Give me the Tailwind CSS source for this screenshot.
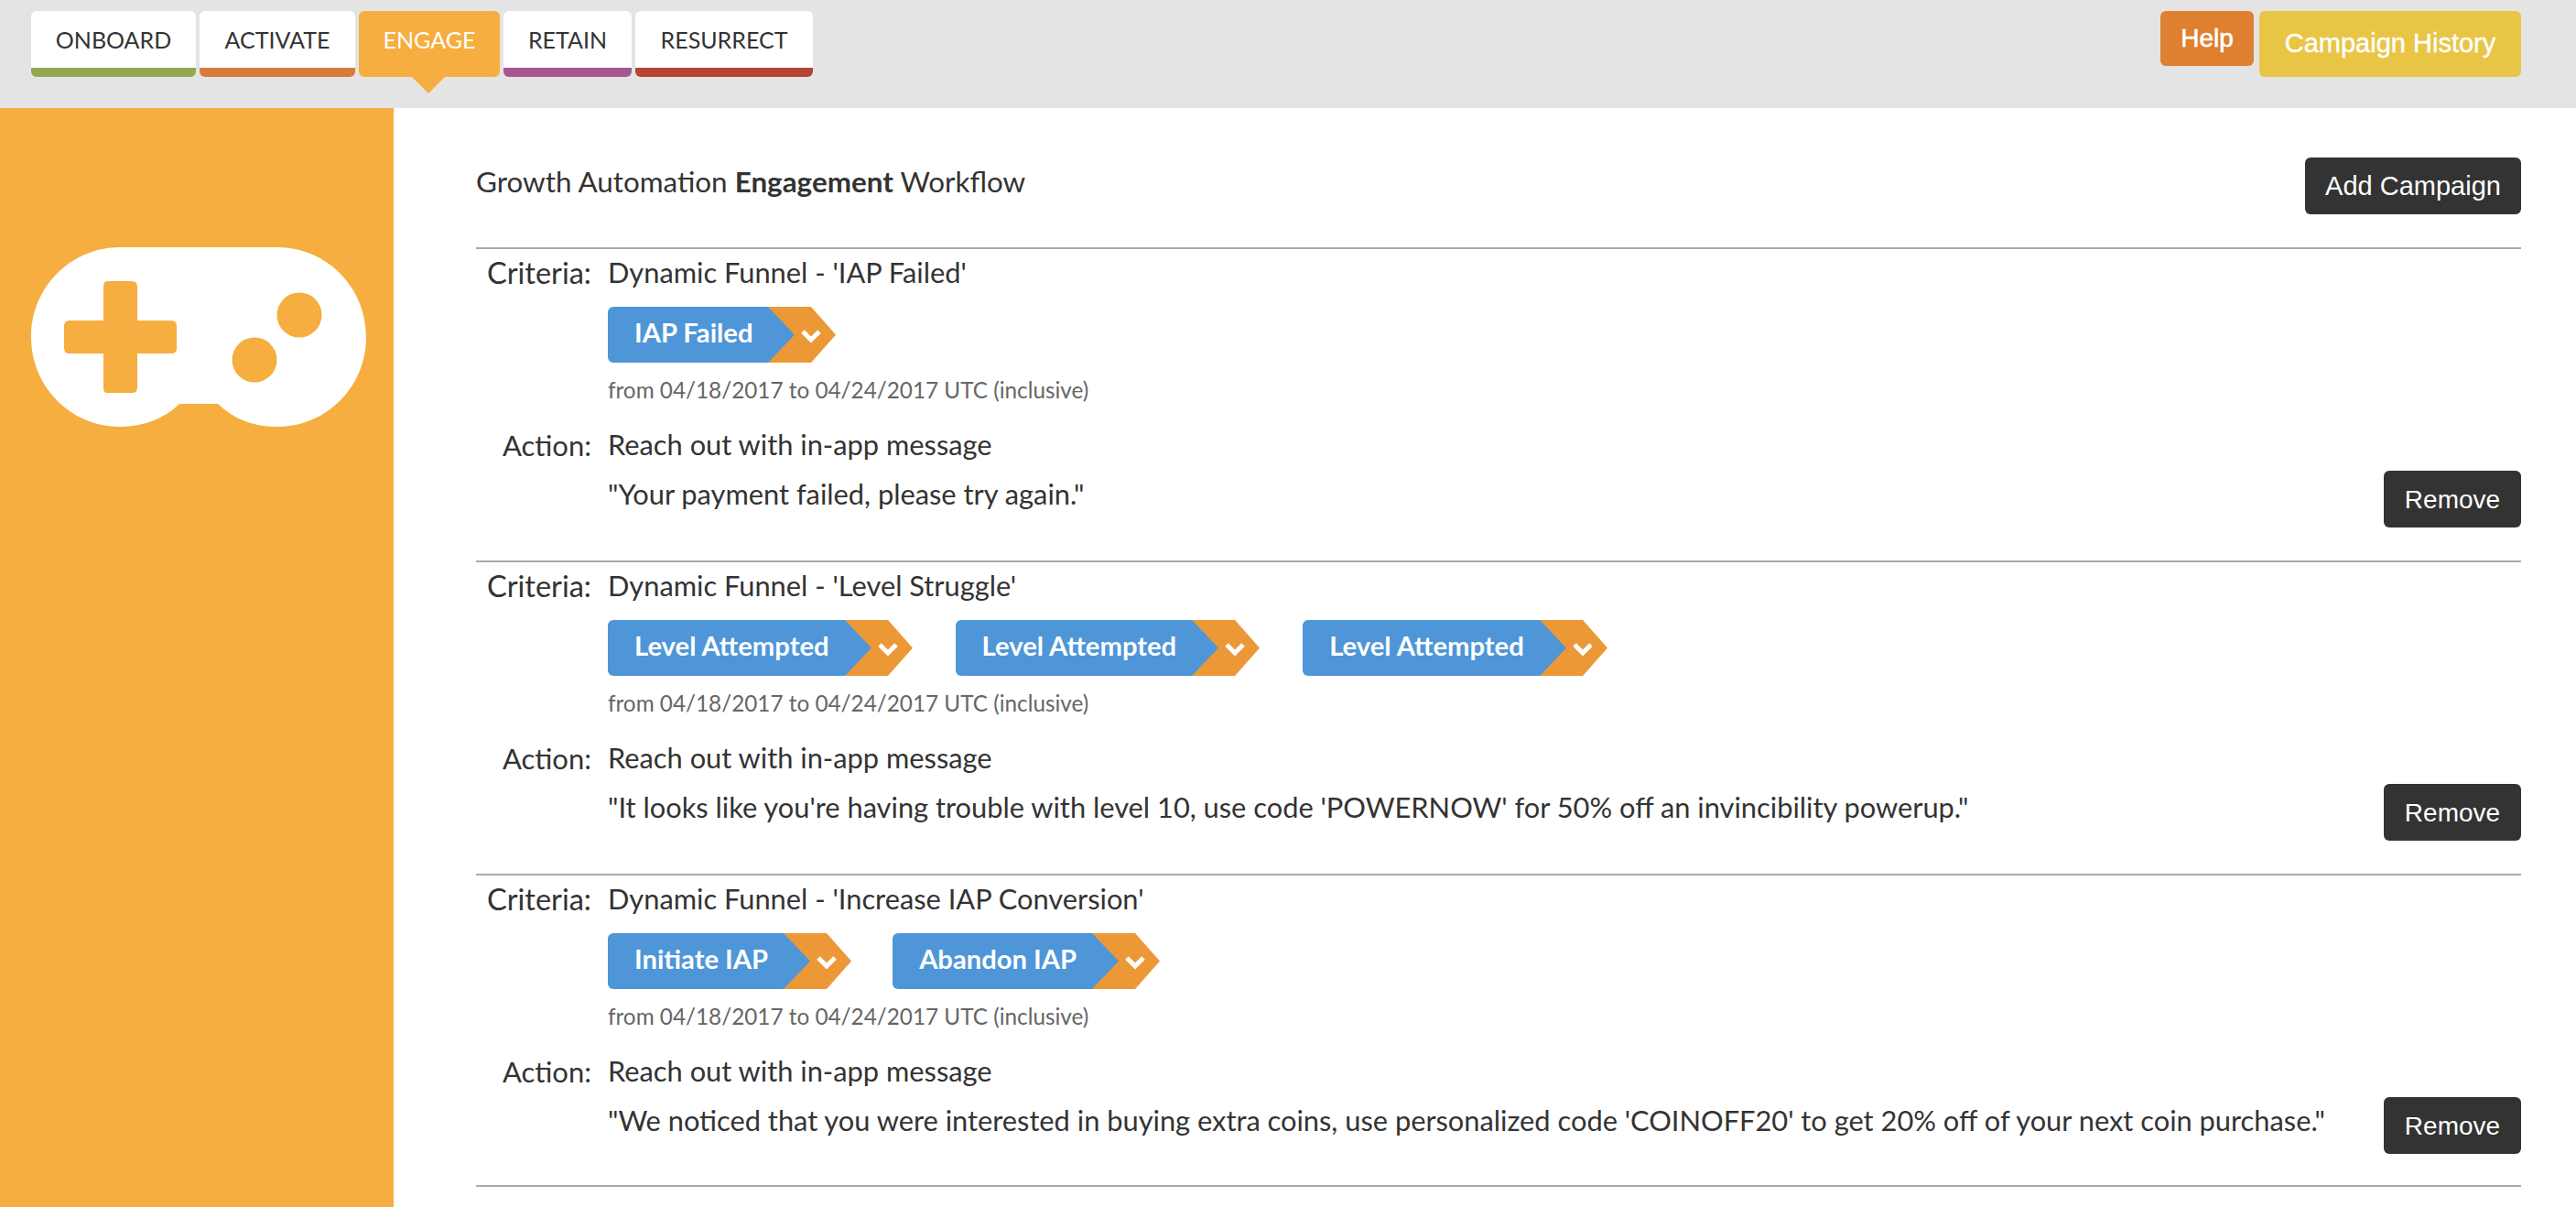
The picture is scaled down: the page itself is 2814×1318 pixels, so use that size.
<!DOCTYPE html>
<html lang="en">
<head>
  <meta charset="UTF-8">
  <title>Growth Automation</title>
  <script src="https://cdn.jsdelivr.net/npm/@tailwindcss/browser@4"></script>
</head>
<body class="bg-white font-['Lato',sans-serif] text-[#333] overflow-hidden">

  <!-- Top bar -->
  <header class="h-[118px] bg-[#e4e4e4] flex justify-between pl-[34px] pr-[60px] pt-[12px]">
    <nav class="flex gap-[4px] items-start text-[25px] leading-[72px]">
      <a class="w-[180px] h-[72px] bg-white rounded-[6px] border-b-[10px] border-[#93a84e] text-center leading-[62px]">ONBOARD</a>
      <a class="w-[170px] h-[72px] bg-white rounded-[6px] border-b-[10px] border-[#d77a3a] text-center leading-[62px]">ACTIVATE</a>
      <a class="relative w-[154px] h-[72px] bg-[#f5ae3f] text-white rounded-[6px] text-center leading-[62px]">ENGAGE
        <span class="absolute left-[58px] top-[72px] w-[36px] h-[18px] bg-[#f5ae3f] [clip-path:polygon(0_0,100%_0,50%_100%)]"></span>
      </a>
      <a class="w-[140px] h-[72px] bg-white rounded-[6px] border-b-[10px] border-[#a65790] text-center leading-[62px]">RETAIN</a>
      <a class="w-[194px] h-[72px] bg-white rounded-[6px] border-b-[10px] border-[#b44535] text-center leading-[62px]">RESURRECT</a>
    </nav>
    <div class="flex gap-[6px] items-start font-['Liberation_Sans',sans-serif] text-white">
      <button class="w-[102px] h-[60px] bg-[#de8030] rounded-[6px] text-[28px] [-webkit-text-stroke:0.6px_white]">Help</button>
      <button class="w-[286px] h-[72px] bg-[#e9c545] rounded-[6px] text-[29px] [-webkit-text-stroke:0.4px_white]">Campaign History</button>
    </div>
  </header>

  <div class="flex h-[1200px]">
    <!-- Sidebar -->
    <aside class="w-[430px] bg-[#f5ae3f] pt-[152px] pl-[34px] shrink-0">
      <svg width="366" height="196" viewBox="0 0 366 196">
        <path fill="#fff" d="M97 0H269C323 0 366 44 366 98C366 152 323 196 269 196C242 196 221 187 204 171H162C145 187 124 196 97 196C43 196 0 152 0 98C0 44 43 0 97 0Z"/>
        <path fill="#f5ae3f" d="M83 37H110Q116 37 116 43V80H153Q159 80 159 86V110Q159 116 153 116H116V153Q116 159 110 159H83Q79 159 79 153V116H42Q36 116 36 110V86Q36 80 42 80H79V43Q79 37 83 37Z"/>
        <circle fill="#f5ae3f" cx="293" cy="74" r="24.5"/>
        <circle fill="#f5ae3f" cx="244" cy="123" r="24.5"/>
      </svg>
    </aside>

    <main class="flex-1 pl-[90px] pr-[60px]">
      <div class="flex justify-between h-[154px] border-b-2 border-[#aaa] items-start pt-[54px]">
        <h1 class="text-[31.4px] leading-[40px] mt-[6px]">Growth Automation <b>Engagement</b> Workflow</h1>
        <button class="w-[236px] h-[62px] bg-[#333] text-white rounded-[6px] font-['Liberation_Sans',sans-serif] text-[29px] pt-[2px]">Add Campaign</button>
      </div>

      <!-- IAP Failed -->
      <section class="flex justify-between items-end h-[342px] border-b-2 border-[#aaa] pb-[36px] text-[30.8px] leading-[40px]">
        <div class="grid grid-cols-[126px_1fr] gap-x-[18px] mb-[16px]">
          <span class="text-right text-[32.5px] leading-[37px]">Criteria:</span>
          <div>
            <p class="leading-[37px]">Dynamic Funnel - 'IAP Failed'</p>
            <div class="flex gap-[47px] mt-[19px]">
              <div class="flex h-[61px] text-white font-bold text-[29.2px] leading-[56px]">
                <span class="bg-[#4e96d8] rounded-l-[6px] pl-[29px] pr-[17px]">IAP Failed</span>
                <svg width="74" height="61" viewBox="0 0 74 61"><path fill="#ed9836" d="M0 0H47L74 30.5L47 61H0Z"/><path fill="#4e96d8" d="M0 0L29 30.5L0 61Z"/><path fill="none" stroke="#fff" stroke-width="5" d="M38 27L47 36L56 27"/></svg>
              </div>
            </div>
            <p class="text-[24.3px] leading-[30px] text-[#666] mt-[15px]">from 04/18/2017 to 04/24/2017 UTC (inclusive)</p>
          </div>
          <span class="text-right mt-[25px] text-[31px]">Action:</span>
          <p class="mt-[25px]">Reach out with in-app message</p>
          <span></span>
          <p class="mt-[14px]">"Your payment failed, please try again."</p>
        </div>
        <button class="w-[150px] h-[62px] bg-[#333] text-white rounded-[6px] font-['Liberation_Sans',sans-serif] text-[28px] pt-[2px]">Remove</button>
      </section>

      <!-- Level Struggle -->
      <section class="flex justify-between items-end h-[342px] border-b-2 border-[#aaa] pb-[36px] text-[30.8px] leading-[40px]">
        <div class="grid grid-cols-[126px_1fr] gap-x-[18px] mb-[16px]">
          <span class="text-right text-[32.5px] leading-[37px]">Criteria:</span>
          <div>
            <p class="leading-[37px]">Dynamic Funnel - 'Level Struggle'</p>
            <div class="flex gap-[47px] mt-[19px]">
              <div class="flex h-[61px] text-white font-bold text-[29.2px] leading-[56px]">
                <span class="bg-[#4e96d8] rounded-l-[6px] pl-[29px] pr-[17px]">Level Attempted</span>
                <svg width="74" height="61" viewBox="0 0 74 61"><path fill="#ed9836" d="M0 0H47L74 30.5L47 61H0Z"/><path fill="#4e96d8" d="M0 0L29 30.5L0 61Z"/><path fill="none" stroke="#fff" stroke-width="5" d="M38 27L47 36L56 27"/></svg>
              </div>
              <div class="flex h-[61px] text-white font-bold text-[29.2px] leading-[56px]">
                <span class="bg-[#4e96d8] rounded-l-[6px] pl-[29px] pr-[17px]">Level Attempted</span>
                <svg width="74" height="61" viewBox="0 0 74 61"><path fill="#ed9836" d="M0 0H47L74 30.5L47 61H0Z"/><path fill="#4e96d8" d="M0 0L29 30.5L0 61Z"/><path fill="none" stroke="#fff" stroke-width="5" d="M38 27L47 36L56 27"/></svg>
              </div>
              <div class="flex h-[61px] text-white font-bold text-[29.2px] leading-[56px]">
                <span class="bg-[#4e96d8] rounded-l-[6px] pl-[29px] pr-[17px]">Level Attempted</span>
                <svg width="74" height="61" viewBox="0 0 74 61"><path fill="#ed9836" d="M0 0H47L74 30.5L47 61H0Z"/><path fill="#4e96d8" d="M0 0L29 30.5L0 61Z"/><path fill="none" stroke="#fff" stroke-width="5" d="M38 27L47 36L56 27"/></svg>
              </div>
            </div>
            <p class="text-[24.3px] leading-[30px] text-[#666] mt-[15px]">from 04/18/2017 to 04/24/2017 UTC (inclusive)</p>
          </div>
          <span class="text-right mt-[25px] text-[31px]">Action:</span>
          <p class="mt-[25px]">Reach out with in-app message</p>
          <span></span>
          <p class="mt-[14px]">"It looks like you're having trouble with level 10, use code 'POWERNOW' for 50% off an invincibility powerup."</p>
        </div>
        <button class="w-[150px] h-[62px] bg-[#333] text-white rounded-[6px] font-['Liberation_Sans',sans-serif] text-[28px] pt-[2px]">Remove</button>
      </section>

      <!-- Increase IAP Conversion -->
      <section class="flex justify-between items-end h-[340px] border-b-2 border-[#aaa] pb-[34px] text-[30.8px] leading-[40px]">
        <div class="grid grid-cols-[126px_1fr] gap-x-[18px] mb-[16px]">
          <span class="text-right text-[32.5px] leading-[37px]">Criteria:</span>
          <div>
            <p class="leading-[37px]">Dynamic Funnel - 'Increase IAP Conversion'</p>
            <div class="flex gap-[45px] mt-[19px]">
              <div class="flex h-[61px] text-white font-bold text-[29.2px] leading-[56px]">
                <span class="bg-[#4e96d8] rounded-l-[6px] pl-[29px] pr-[17px]">Initiate IAP</span>
                <svg width="74" height="61" viewBox="0 0 74 61"><path fill="#ed9836" d="M0 0H47L74 30.5L47 61H0Z"/><path fill="#4e96d8" d="M0 0L29 30.5L0 61Z"/><path fill="none" stroke="#fff" stroke-width="5" d="M38 27L47 36L56 27"/></svg>
              </div>
              <div class="flex h-[61px] text-white font-bold text-[29.2px] leading-[56px]">
                <span class="bg-[#4e96d8] rounded-l-[6px] pl-[29px] pr-[17px]">Abandon IAP</span>
                <svg width="74" height="61" viewBox="0 0 74 61"><path fill="#ed9836" d="M0 0H47L74 30.5L47 61H0Z"/><path fill="#4e96d8" d="M0 0L29 30.5L0 61Z"/><path fill="none" stroke="#fff" stroke-width="5" d="M38 27L47 36L56 27"/></svg>
              </div>
            </div>
            <p class="text-[24.3px] leading-[30px] text-[#666] mt-[15px]">from 04/18/2017 to 04/24/2017 UTC (inclusive)</p>
          </div>
          <span class="text-right mt-[25px] text-[31px]">Action:</span>
          <p class="mt-[25px]">Reach out with in-app message</p>
          <span></span>
          <p class="mt-[14px]">"We noticed that you were interested in buying extra coins, use personalized code 'COINOFF20' to get 20% off of your next coin purchase."</p>
        </div>
        <button class="w-[150px] h-[62px] bg-[#333] text-white rounded-[6px] font-['Liberation_Sans',sans-serif] text-[28px] pt-[2px]">Remove</button>
      </section>
    </main>
  </div>

</body>
</html>
